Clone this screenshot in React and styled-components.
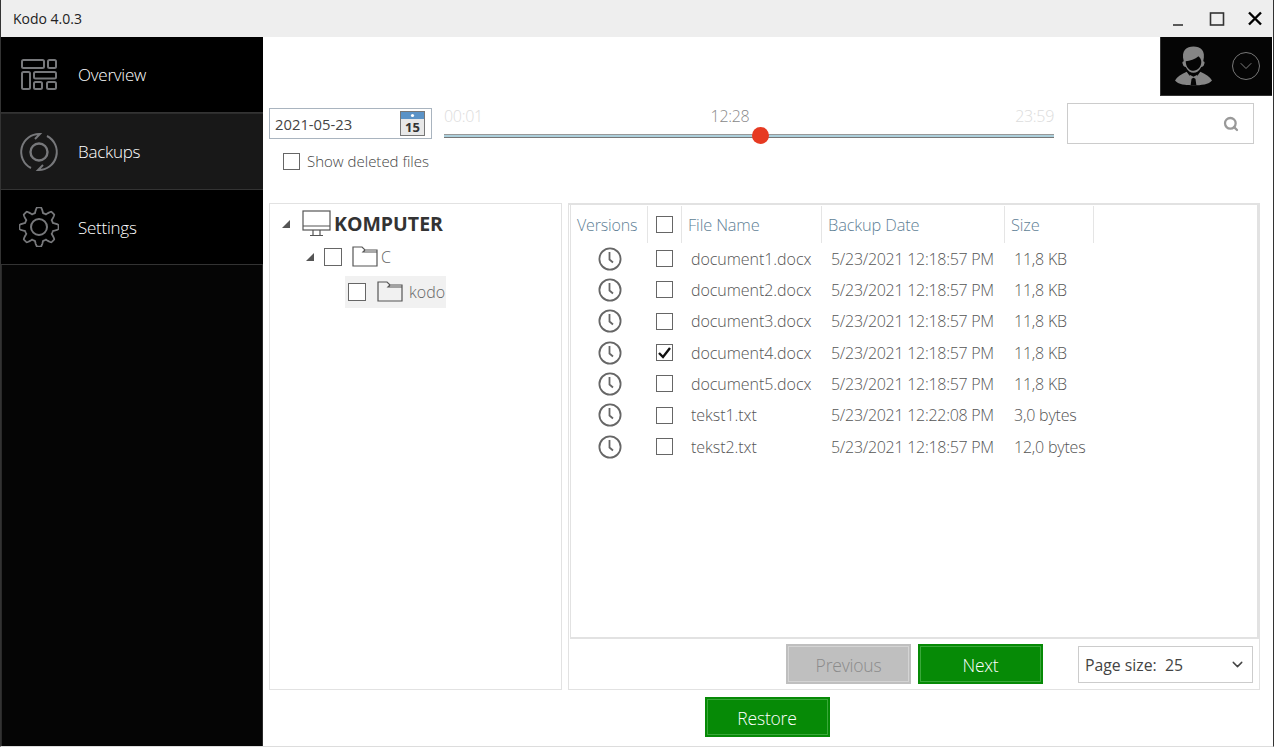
import styled, { createGlobalStyle } from "styled-components";
import { ChevronDown, Search } from "lucide-react";

const GlobalStyle = createGlobalStyle`
	html, body {
		margin: 0;
		padding: 0;
		height: 100%;
		background: #fff;
		overflow: hidden;
	}
	* {
		box-sizing: border-box;
	}
	body {
		font-family: "Open Sans", "Noto Sans", sans-serif;
		font-weight: 300;
		color: #444;
	}
`;

const Window = styled.div`
	width: 1274px;
	height: 747px;
	display: flex;
	flex-direction: column;
	border-left: 1px solid #333;
	border-right: 1px solid #333;
	border-bottom: 1px solid #ddd;
`;

const TitleBar = styled.div`
	height: 37px;
	flex: none;
	background: #eeeeee;
	display: flex;
	align-items: center;
	justify-content: space-between;
	padding: 0 10px 0 12px;
	font-size: 14px;
	font-weight: 400;
	color: #222;
`;

const WindowButtons = styled.div`
	display: flex;
	align-items: center;
	gap: 22px;
	height: 100%;
`;

const WinIcon = styled.svg`
	width: 16px;
	height: 16px;
	display: block;
`;

const Body = styled.div`
	flex: 1;
	display: flex;
	min-height: 0;
`;

const Sidebar = styled.nav`
	width: 262px;
	flex: none;
	background: #000;
	display: flex;
	flex-direction: column;
`;

const NavItem = styled.div`
	height: ${(props) => props.$height}px;
	display: flex;
	align-items: center;
	gap: 19px;
	padding-left: 18px;
	background: ${(props) => (props.$active ? "#181818" : "#000")};
	border-bottom: 1px solid #333;
	border-top: ${(props) => (props.$active ? "1px solid #2c2c2c" : "none")};
	color: #fff;
	font-size: 17px;
	letter-spacing: -0.25px;
`;

const NavIcon = styled.div`
	width: 40px;
	height: 40px;
	color: #77787b;
	display: flex;
	align-items: center;
	justify-content: center;
	flex: none;
`;

const SidebarRest = styled.div`
	flex: 1;
	background: #050505;
	border-left: 1px solid #2a2a2a;
	border-right: 1px solid #2a2a2a;
`;

const Main = styled.main`
	flex: 1;
	min-width: 0;
	display: flex;
	flex-direction: column;
	padding-left: 6px;
`;

const TopRow = styled.div`
	height: 59px;
	flex: none;
	display: flex;
	justify-content: flex-end;
	padding-right: 1px;
`;

const UserPanel = styled.div`
	width: 112px;
	background: #050505;
	border-bottom: 1px solid #333;
	border-left: 1px solid #333;
	display: flex;
	align-items: center;
	gap: 20px;
	padding-left: 14px;
	color: #858585;
`;

const ChevronCircle = styled.div`
	width: 28px;
	height: 28px;
	border-radius: 50%;
	border: 1px solid #777;
	color: #888;
	display: flex;
	align-items: center;
	justify-content: center;
`;

const FilterRow = styled.div`
	height: 107px;
	flex: none;
	display: flex;
	align-items: flex-start;
`;

const DateColumn = styled.div`
	width: 175px;
	flex: none;
	padding-top: 12px;
`;

const DateField = styled.div`
	width: 163px;
	height: 31px;
	border: 1px solid #a9b4bf;
	display: flex;
	align-items: center;
	justify-content: space-between;
	padding: 0 6px 0 5px;
	font-size: 14.8px;
	font-weight: 400;
	color: #444;
`;

const ShowDeleted = styled.label`
	display: flex;
	align-items: center;
	gap: 7px;
	margin: 12px 0 0 14px;
	font-size: 15px;
	color: #444;
	white-space: nowrap;
`;

const Box = styled.span`
	width: ${(props) => props.$size || 17}px;
	height: ${(props) => props.$size || 17}px;
	border: 1px solid #666;
	background: #fff;
	display: inline-flex;
	align-items: center;
	justify-content: center;
	flex: none;
`;

const SliderArea = styled.div`
	width: 610px;
	flex: none;
	padding-top: 9px;
`;

const SliderLabels = styled.div`
	display: flex;
	justify-content: space-between;
	height: 26px;
	font-size: 16px;
	letter-spacing: -0.3px;
	color: #dcdcdc;
`;

const CurrentTime = styled.span`
	color: #888;
	position: relative;
	left: -19px;
`;

const SliderTrack = styled.div`
	position: relative;
	height: 4px;
	margin-top: 3px;
	background: #add0dc;
	border-bottom: 1px solid #777;
	border-top: 1px solid #999;
`;

const SliderThumb = styled.div`
	position: absolute;
	left: 308px;
	top: -8px;
	width: 17px;
	height: 17px;
	border-radius: 50%;
	background: #e63a22;
`;

const SearchBox = styled.div`
	width: 187px;
	height: 41px;
	margin: 7px 0 0 13px;
	border: 1px solid #ccc;
	display: flex;
	align-items: center;
	justify-content: flex-end;
	padding-right: 14px;
	color: #999;
`;

const Panels = styled.div`
	height: 487px;
	flex: none;
	display: flex;
	gap: 6px;
	margin-right: 13px;
`;

const TreePanel = styled.div`
	width: 293px;
	flex: none;
	border: 1px solid #e2e2e2;
	padding: 6px 0 0 12px;
`;

const TreeRow = styled.div`
	height: ${(props) => props.$height}px;
	display: flex;
	align-items: center;
	gap: ${(props) => props.$gap}px;
	margin-left: ${(props) => props.$indent}px;
`;

const Triangle = styled.span`
	width: 0;
	height: 0;
	border-left: 8px solid transparent;
	border-bottom: 8px solid #555;
	flex: none;
`;

const RootLabel = styled.span`
	font-size: 19.5px;
	font-weight: 700;
	color: #333;
	margin-left: -9px;
`;

const FolderLabel = styled.span`
	font-size: 16px;
	color: #666;
	margin-left: ${(props) => props.$offset}px;
`;

const SelectedNode = styled.div`
	display: flex;
	align-items: center;
	gap: 11px;
	background: #f1f1f1;
	height: 32px;
	width: 101px;
	padding-left: 3px;
`;

const GridPanel = styled.div`
	flex: 1;
	min-width: 0;
	display: flex;
	flex-direction: column;
	border: 1px solid #e2e2e2;
	border-top-width: 2px;
`;

const TableFrame = styled.div`
	height: 434px;
	flex: none;
	margin-left: 1px;
	padding-top: 1px;
	border-right: 2px solid #e2e2e2;
	border-bottom: 2px solid #e2e2e2;
	border-left: 1px solid #e2e2e2;
`;

const FileGrid = styled.div`
	display: grid;
	grid-template-columns: 77px 34px 140px 183px 89px;
	grid-auto-rows: 31.33px;
	grid-template-rows: 37px;
	font-size: 16px;
`;

const HeadCell = styled.div`
	display: flex;
	align-items: center;
	padding-left: ${(props) => props.$pad ?? 6}px;
	border-right: 1px solid #e5e5e5;
	color: #5f7f96;
	font-size: ${(props) => props.$size ?? 16.4}px;
	letter-spacing: -0.15px;
	white-space: nowrap;
`;

const Cell = styled.div`
	display: flex;
	align-items: center;
	padding-left: ${(props) => props.$pad ?? 0}px;
	color: #555;
	letter-spacing: ${(props) => props.$spacing ?? -0.2}px;
	white-space: nowrap;
`;

const Pager = styled.div`
	flex: 1;
	display: flex;
	align-items: center;
	justify-content: flex-end;
	gap: 7px;
	padding: 0 6px 0 0;
`;

const ActionButton = styled.button`
	width: 125px;
	height: 40px;
	border: 2px solid ${(props) => (props.disabled ? "#bfbfbf" : "#068a06")};
	outline: 1px solid ${(props) => (props.disabled ? "#d4d4d4" : "#3aa83a")};
	outline-offset: -3px;
	background: ${(props) => (props.disabled ? "#bfbfbf" : "#068a06")};
	color: ${(props) => (props.disabled ? "#8b8b8b" : "#fff")};
	font-family: inherit;
	font-size: 17.5px;
	font-weight: 300;
	letter-spacing: -0.2px;
	padding: 2px 0 0;
`;

const PageSize = styled.div`
	width: 175px;
	height: 37px;
	margin-left: 28px;
	border: 1px solid #ccc;
	display: flex;
	align-items: center;
	justify-content: space-between;
	padding: 1px 6px 0;
	font-size: 15.8px;
	font-weight: 400;
	color: #444;
	white-space: pre;
`;

const Footer = styled.div`
	flex: 1;
	display: flex;
	justify-content: center;
	padding-top: 7px;
	margin-right: 13px;
	margin-left: 5px;
`;

const files = [
	["document1.docx", "5/23/2021 12:18:57 PM", "11,8 KB"],
	["document2.docx", "5/23/2021 12:18:57 PM", "11,8 KB"],
	["document3.docx", "5/23/2021 12:18:57 PM", "11,8 KB"],
	["document4.docx", "5/23/2021 12:18:57 PM", "11,8 KB", true],
	["document5.docx", "5/23/2021 12:18:57 PM", "11,8 KB"],
	["tekst1.txt", "5/23/2021 12:22:08 PM", "3,0 bytes"],
	["tekst2.txt", "5/23/2021 12:18:57 PM", "12,0 bytes"],
];

function gearPath() {
	const points = [];
	for (let i = 0; i < 240; i++) {
		const angle = (i / 240) * Math.PI * 2;
		const wave = Math.cos(angle * 8);
		const radius = 17 + 2.6 * Math.max(-1, Math.min(1, wave * 1.5));
		points.push(`${(20 + radius * Math.sin(angle)).toFixed(2)} ${(20 - radius * Math.cos(angle)).toFixed(2)}`);
	}
	return `M${points.join(" L")} Z`;
}

function OverviewIcon() {
	return (
		<svg width="38" height="32" viewBox="0 0 38 32" fill="none" stroke="currentColor" strokeWidth="2">
			<rect x="2" y="1" width="22" height="8" rx="1.5" />
			<rect x="28" y="1" width="8" height="8" rx="1.5" />
			<rect x="2" y="13" width="8" height="17" rx="1.5" />
			<rect x="14" y="13" width="22" height="6.5" rx="1.5" />
			<rect x="14" y="23" width="8" height="7" rx="1.5" />
			<rect x="27" y="23" width="9" height="7" rx="1.5" />
		</svg>
	);
}

function BackupsIcon() {
	return (
		<svg width="40" height="40" viewBox="0 0 40 40" fill="none" stroke="currentColor" strokeWidth="2">
			<circle cx="20" cy="20" r="8.5" strokeWidth="2.4" />
			<path d="M12 36 A18 18 0 0 1 21 2 L16 7" />
			<path d="M28 4 A18 18 0 0 1 19 38 L24 33" />
		</svg>
	);
}

function SettingsIcon() {
	return (
		<svg width="40" height="40" viewBox="0 0 40 40" fill="none" stroke="currentColor" strokeWidth="1.8">
			<path d={gearPath()} strokeLinejoin="round" />
			<circle cx="20" cy="20" r="8" strokeWidth="2" />
		</svg>
	);
}

function UserIcon() {
	return (
		<svg width="37" height="40" viewBox="0 0 38 40" fill="currentColor">
			<path d="M9 15 C6 4 12 0 19 0 C26 0 32 4 29 15 C30 15 31 16 30 18 C30 20 28 21 27 21 C25 25 22 27 19 27 C16 27 13 25 11 21 C10 21 8 20 8 18 C7 16 8 15 9 15 Z" />
			<path d="M11 15 C15 15 21 13 24 10 C26 12 27 13 27 16 C27 21 23 25 19 25 C15 25 11 21 11 15 Z" fill="#050505" />
			<path d="M12 26 C6 29 2 31 0 35 C3 39 11 40 19 40 C27 40 35 39 38 35 C36 31 32 29 26 26 L23 30 L15 30 Z" />
			<path d="M14 28 L24 28 L21 33 L22 40 L16 40 L17 33 Z" fill="#050505" />
			<path d="M15 29 L19 31 L23 29 L23 34 L19 32 L15 34 Z" />
		</svg>
	);
}

function CalendarIcon() {
	return (
		<svg width="25" height="25" viewBox="0 0 25 25">
			<rect x="0.5" y="0.5" width="24" height="24" fill="#e8e8e8" stroke="#777" />
			<rect x="1" y="1" width="23" height="7" fill="#5b93c7" />
			<circle cx="12.5" cy="4.5" r="1.6" fill="#fff" />
			<text x="12.5" y="21" textAnchor="middle" fontSize="13" fontWeight="700" fill="#333" fontFamily="Open Sans, sans-serif">15</text>
		</svg>
	);
}

function ComputerIcon() {
	return (
		<svg width="29" height="27" viewBox="0 0 29 27" fill="none" stroke="#555" strokeWidth="1.2">
			<rect x="1" y="1" width="27" height="19" />
			<path d="M1 16 H28 M11 20 V25 M18 20 V25 M8 25.5 H21" />
		</svg>
	);
}

function FolderIcon() {
	return (
		<svg width="26" height="21" viewBox="0 0 26 21" fill="none" stroke="#555" strokeWidth="1.2">
			<path d="M1 20 V1 H10 L13 4 H25 V20 Z M13 4 L11 6 H25" />
		</svg>
	);
}

function ClockIcon() {
	return (
		<svg width="24" height="24" viewBox="0 0 24 24" fill="none" stroke="#666" strokeWidth="1.8">
			<circle cx="12" cy="12" r="10.6" />
			<path d="M11.5 5 V12.5 L15 15.5" />
		</svg>
	);
}

function Row({ name, date, size, checked }) {
	return (
		<>
			<Cell $pad={27}><ClockIcon /></Cell>
			<Cell $pad={8}>
				<Box>
					{checked && (
						<svg width="13" height="12" viewBox="0 0 13 12">
							<path d="M1 6 L5 10 L12 1" fill="none" stroke="#111" strokeWidth="2.4" />
						</svg>
					)}
				</Box>
			</Cell>
			<Cell $pad={9} $spacing={-0.05}>{name}</Cell>
			<Cell $pad={9} $spacing={-0.28}>{date}</Cell>
			<Cell $pad={9}>{size}</Cell>
		</>
	);
}

function App() {
	return (
		<Window>
			<GlobalStyle />
			<TitleBar>
				<span>Kodo 4.0.3</span>
				<WindowButtons>
					<WinIcon viewBox="0 0 16 16">
						<path d="M2 14 H12" stroke="#333" strokeWidth="1.6" />
					</WinIcon>
					<WinIcon viewBox="0 0 16 16">
						<rect x="1.5" y="2" width="13" height="12" fill="none" stroke="#333" strokeWidth="1.6" />
					</WinIcon>
					<WinIcon viewBox="0 0 16 16">
						<path d="M2 1.5 L14 13.5 M14 1.5 L2 13.5" stroke="#000" strokeWidth="2.4" />
					</WinIcon>
				</WindowButtons>
			</TitleBar>
			<Body>
				<Sidebar>
					<NavItem $height={76}>
						<NavIcon><OverviewIcon /></NavIcon>
						Overview
					</NavItem>
					<NavItem $height={77} $active>
						<NavIcon><BackupsIcon /></NavIcon>
						Backups
					</NavItem>
					<NavItem $height={75}>
						<NavIcon><SettingsIcon /></NavIcon>
						Settings
					</NavItem>
					<SidebarRest />
				</Sidebar>
				<Main>
					<TopRow>
						<UserPanel>
							<UserIcon />
							<ChevronCircle><ChevronDown size={20} strokeWidth={1.1} /></ChevronCircle>
						</UserPanel>
					</TopRow>
					<FilterRow>
						<DateColumn>
							<DateField>
								2021-05-23
								<CalendarIcon />
							</DateField>
							<ShowDeleted>
								<Box />
								Show deleted files
							</ShowDeleted>
						</DateColumn>
						<SliderArea>
							<SliderLabels>
								<span>00:01</span>
								<CurrentTime>12:28</CurrentTime>
								<span>23:59</span>
							</SliderLabels>
							<SliderTrack>
								<SliderThumb />
							</SliderTrack>
						</SliderArea>
						<SearchBox>
							<Search size={16} strokeWidth={3.4} />
						</SearchBox>
					</FilterRow>
					<Panels>
						<TreePanel>
							<TreeRow $height={27} $gap={12} $indent={0}>
								<Triangle />
								<ComputerIcon />
								<RootLabel>KOMPUTER</RootLabel>
							</TreeRow>
							<TreeRow $height={39} $gap={10} $indent={24}>
								<Triangle />
								<Box $size={18} />
								<FolderIcon />
								<FolderLabel $offset={-7}>C</FolderLabel>
							</TreeRow>
							<TreeRow $height={31} $gap={0} $indent={63}>
								<SelectedNode>
									<Box $size={18} />
									<FolderIcon />
									<FolderLabel $offset={-5}>kodo</FolderLabel>
								</SelectedNode>
							</TreeRow>
						</TreePanel>
						<GridPanel>
							<TableFrame>
								<FileGrid>
									<HeadCell $size={16}>Versions</HeadCell>
									<HeadCell $pad={8}><Box /></HeadCell>
									<HeadCell>File Name</HeadCell>
									<HeadCell>Backup Date</HeadCell>
									<HeadCell>Size</HeadCell>
									{files.map(([name, date, size, checked]) => (
										<Row key={name} name={name} date={date} size={size} checked={checked} />
									))}
								</FileGrid>
							</TableFrame>
							<Pager>
								<ActionButton disabled>Previous</ActionButton>
								<ActionButton>Next</ActionButton>
								<PageSize>
									<span>Page size:  25</span>
									<ChevronDown size={17} strokeWidth={2} />
								</PageSize>
							</Pager>
						</GridPanel>
					</Panels>
					<Footer>
						<ActionButton>Restore</ActionButton>
					</Footer>
				</Main>
			</Body>
		</Window>
	);
}

export default App;
